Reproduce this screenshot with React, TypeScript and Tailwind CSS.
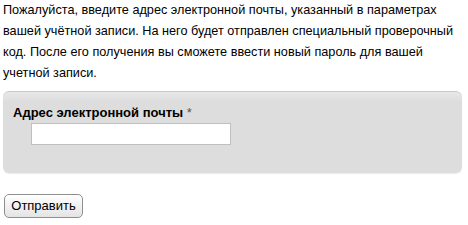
export default function App() {
  return (
    <div className="w-[468px] h-[225px] bg-white text-black font-['Liberation_Sans',Arial,sans-serif] text-[13px]">
      <p className="leading-[21px] pl-[3px] pr-[2px] text-[12.7px]">
        Пожалуйста, введите адрес электронной почты, указанный в параметрах вашей учётной записи. На него будет отправлен специальный проверочный код. После его получения вы сможете ввести новый пароль для вашей учетной записи.
      </p>
      <div className="mt-[7px] ml-[3px] w-[459px] h-[82px] rounded-[6px] bg-gradient-to-b from-[#e8e8e8] via-[#dddddd] via-[12%] to-[#dddddd] border-t border-[#c8c8c8] shadow-[0_1px_1px_rgba(0,0,0,0.08)] pt-[13px] pl-[10px]">
        <div className="font-bold leading-[16px]">
          Адрес электронной почты <span className="text-[#555] font-normal">*</span>
        </div>
        <input
          type="text"
          className="block mt-[2px] ml-[18px] w-[200px] h-[22px] bg-white border border-[#c0c0c0] outline-none"
        />
      </div>
      <button className="mt-[21px] ml-[4px] w-[79px] h-[24px] rounded-[5px] border border-[#8f8f8f] bg-gradient-to-b from-white to-[#e4e4e4] text-[13px] leading-[20px]">
        Отправить
      </button>
    </div>
  );
}
